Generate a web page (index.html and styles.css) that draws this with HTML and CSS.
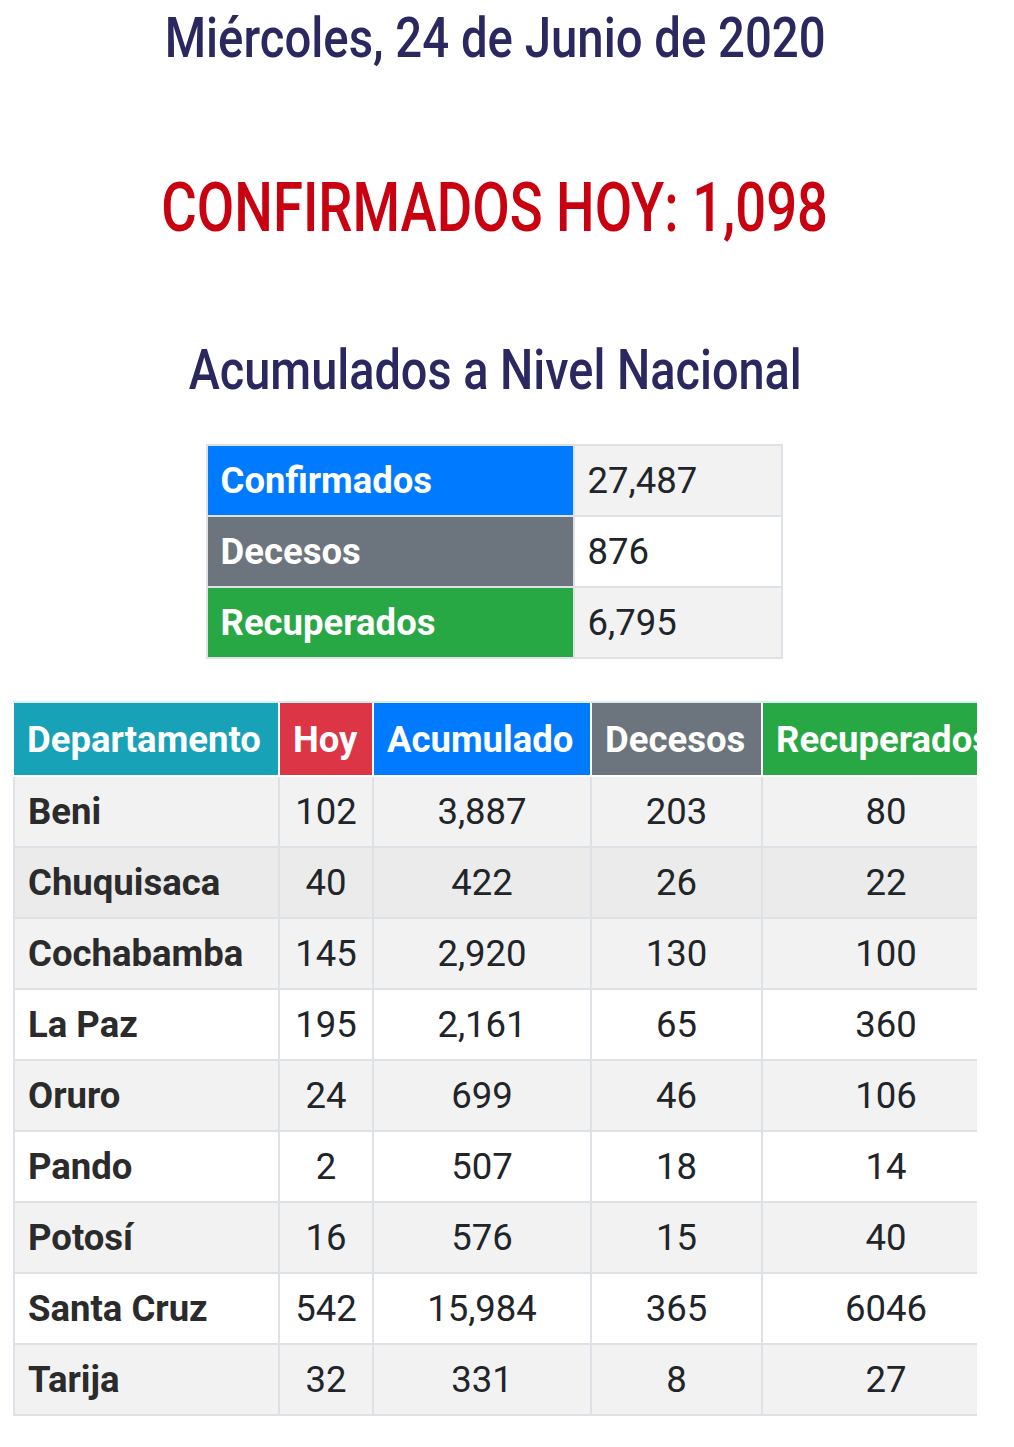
FILE: index.html
```html
<!DOCTYPE html>
<html lang="es">
<head>
<meta charset="utf-8">
<title>Reporte COVID-19 Bolivia</title>
<link rel="stylesheet" href="styles.css">
</head>
<body>
<main class="page">
  <h1 class="title date"><span>Miércoles, 24 de Junio de 2020</span></h1>
  <h2 class="title today"><span>CONFIRMADOS HOY: 1,098</span></h2>
  <h2 class="title national"><span>Acumulados a Nivel Nacional</span></h2>

  <table class="summary">
    <tbody>
      <tr class="stripe"><th class="bg-blue">Confirmados</th><td>27,487</td></tr>
      <tr><th class="bg-gray">Decesos</th><td>876</td></tr>
      <tr class="stripe"><th class="bg-green">Recuperados</th><td>6,795</td></tr>
    </tbody>
  </table>

  <div class="scroller">
    <table class="depts">
      <thead>
        <tr>
          <th class="bg-teal c-dep">Departamento</th>
          <th class="bg-red c-hoy">Hoy</th>
          <th class="bg-blue c-acu">Acumulado</th>
          <th class="bg-gray c-dec">Decesos</th>
          <th class="bg-green c-rec">Recuperados</th>
        </tr>
      </thead>
      <tbody>
        <tr class="stripe"><th>Beni</th><td>102</td><td>3,887</td><td>203</td><td>80</td></tr>
        <tr class="hover"><th>Chuquisaca</th><td>40</td><td>422</td><td>26</td><td>22</td></tr>
        <tr class="stripe"><th>Cochabamba</th><td>145</td><td>2,920</td><td>130</td><td>100</td></tr>
        <tr><th>La Paz</th><td>195</td><td>2,161</td><td>65</td><td>360</td></tr>
        <tr class="stripe"><th>Oruro</th><td>24</td><td>699</td><td>46</td><td>106</td></tr>
        <tr><th>Pando</th><td>2</td><td>507</td><td>18</td><td>14</td></tr>
        <tr class="stripe"><th>Potosí</th><td>16</td><td>576</td><td>15</td><td>40</td></tr>
        <tr><th>Santa Cruz</th><td>542</td><td>15,984</td><td>365</td><td>6046</td></tr>
        <tr class="stripe"><th>Tarija</th><td>32</td><td>331</td><td>8</td><td>27</td></tr>
      </tbody>
    </table>
  </div>
</main>
</body>
</html>
```

FILE: styles.css
```css
html, body {
  margin: 0;
  padding: 0;
  background: #ffffff;
}

body {
  font-family: Roboto, "Noto Sans", "Liberation Sans", sans-serif;
  color: #212529;
}

.page {
  width: 964px;
  margin-left: 13px;
  display: flex;
  flex-direction: column;
  align-items: center;
}

.title {
  margin: 0;
  font-weight: 500;
  text-align: center;
  white-space: nowrap;
}

.title span {
  display: inline-block;
  transform: scaleX(0.845);
  transform-origin: center;
}

.date {
  margin-top: 5px;
  font-size: 56px;
  line-height: 66px;
  color: #2b2860;
}

.today {
  margin-top: 97px;
  font-size: 68px;
  line-height: 80px;
  color: #c80010;
}

.today span {
  transform: scaleX(0.8);
}

.national {
  margin-top: 89px;
  font-size: 56px;
  line-height: 66px;
  color: #2b2860;
}

.national span {
  transform: scaleX(0.837);
}

/* summary table */
.summary {
  margin-top: 41px;
  margin-right: 2px;
  border-collapse: collapse;
  width: 577px;
  font-size: 36.5px;
}

.summary th,
.summary td {
  height: 71px;
  padding: 0 13px;
  border: 2px solid #dee2e6;
  text-align: left;
  box-sizing: border-box;
}

.summary th {
  width: 367px;
  color: #ffffff;
  font-weight: 700;
}

.summary td {
  font-weight: 400;
  background: #ffffff;
}

.summary .stripe td {
  background: #f2f2f2;
}

/* department table */
.scroller {
  align-self: stretch;
  overflow: hidden;
  margin-top: 42px;
  border-top: 2px solid #d9eef2;
}

.depts {
  border-collapse: collapse;
  font-size: 36.5px;
  white-space: nowrap;
  width: 996px;
  table-layout: fixed;
}

.depts th,
.depts td {
  height: 71px;
  padding: 0 13px;
  box-sizing: border-box;
}

.depts thead th {
  height: 73px;
  color: #ffffff;
  font-weight: 700;
  text-align: left;
  border: 2px solid #ffffff;
  border-top: 0;
  overflow: hidden;
}

.depts thead th:first-child {
  border-left: 0;
}

.depts tbody th,
.depts tbody td {
  border: 2px solid #dee2e6;
  background: #ffffff;
}

.depts tbody th {
  text-align: left;
  font-weight: 700;
  color: #2b2b2b;
}

.depts tbody td {
  text-align: center;
  font-weight: 400;
}

.depts tbody tr.stripe th,
.depts tbody tr.stripe td {
  background: #f2f2f2;
}

.depts tbody tr.hover th,
.depts tbody tr.hover td {
  background: #ebebeb;
}

.c-dep { width: 265px; }
.c-hoy { width: 94px; }
.c-acu { width: 218px; }
.c-dec { width: 171px; }
.c-rec { width: 248px; }

.bg-blue { background: #007bff; }
.bg-gray { background: #6c757d; }
.bg-green { background: #28a745; }
.bg-teal { background: #17a2b8; }
.bg-red { background: #dc3545; }
```
